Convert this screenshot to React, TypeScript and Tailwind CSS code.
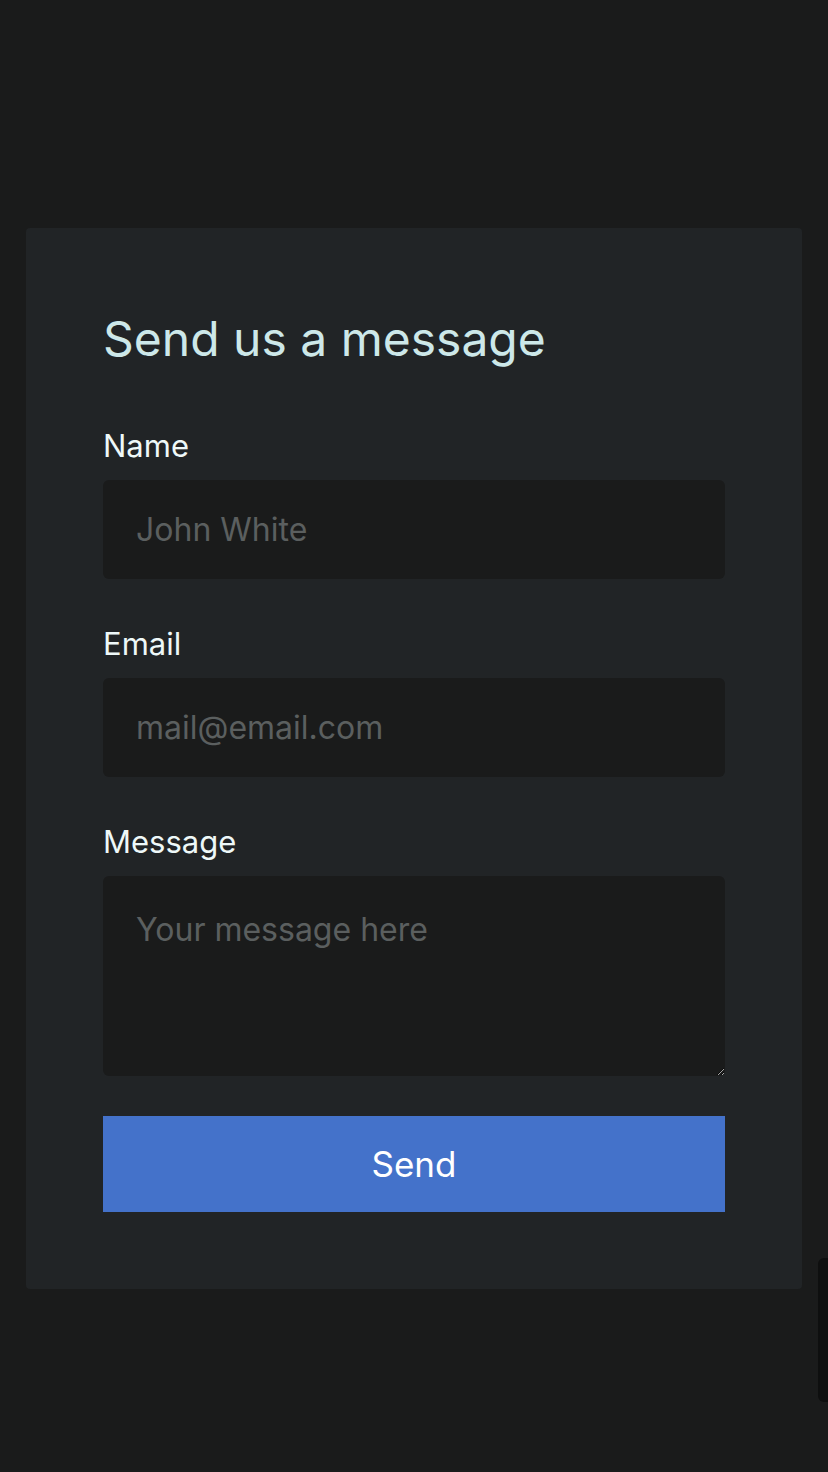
import React, { useState } from 'react'

const Field: React.FC<{ label: string; children: React.ReactNode }> = ({ label, children }) => (
  <div className="flex flex-col mb-[47px]">
    <label className="text-[31px] leading-[36px] text-[#eef8f8] mb-[16px]">{label}</label>
    {children}
  </div>
)

const App: React.FC = () => {
  const [name, setName] = useState('')
  const [email, setEmail] = useState('')
  const [message, setMessage] = useState('')

  return (
    <div
      className="relative min-h-screen bg-[#1a1b1b] px-[26px] pt-[228px] pb-[183px]"
      style={{ fontFamily: 'Inter, "Noto Sans", sans-serif' }}
    >
      {/* CARTAO DO FORMULARIO */}
      <div className="bg-[#212426] rounded-[4px] pl-[77px] pr-[77px] pt-[82px] pb-[77px]">
        <h2 className="text-[48px] leading-[58px] text-[#cde8e9] mb-[60px]">Send us a message</h2>

        <form onSubmit={e => e.preventDefault()}>
          <Field label="Name">
            <input
              value={name}
              onChange={e => setName(e.target.value)}
              placeholder="John White"
              className="h-[99px] w-full rounded-[6px] bg-[#1a1b1b] px-[33px] text-[32px] text-[#eef8f8] placeholder:text-[#5b5f5f] outline-none"
            />
          </Field>

          <Field label="Email">
            <input
              value={email}
              onChange={e => setEmail(e.target.value)}
              placeholder="mail@email.com"
              className="h-[99px] w-full rounded-[6px] bg-[#1a1b1b] px-[33px] text-[32px] text-[#eef8f8] placeholder:text-[#5b5f5f] outline-none"
            />
          </Field>

          <div className="flex flex-col">
            <label className="text-[31px] leading-[36px] text-[#eef8f8] mb-[16px]">Message</label>
            <textarea
              value={message}
              onChange={e => setMessage(e.target.value)}
              placeholder="Your message here"
              className="block h-[200px] w-full rounded-[6px] bg-[#1a1b1b] px-[33px] pt-[34px] text-[32px] leading-[39px] text-[#eef8f8] placeholder:text-[#5b5f5f] outline-none"
            />
          </div>

          <button
            type="submit"
            className="mt-[40px] h-[96px] w-full bg-[#4472ca] text-[35px] text-white"
          >
            Send
          </button>
        </form>
      </div>

      {/* barra lateral escura */}
      <div className="absolute right-0 top-[1258px] h-[144px] w-[10px] rounded-l-[6px] bg-[#0e0f0f]" />
    </div>
  )
}

export default App
